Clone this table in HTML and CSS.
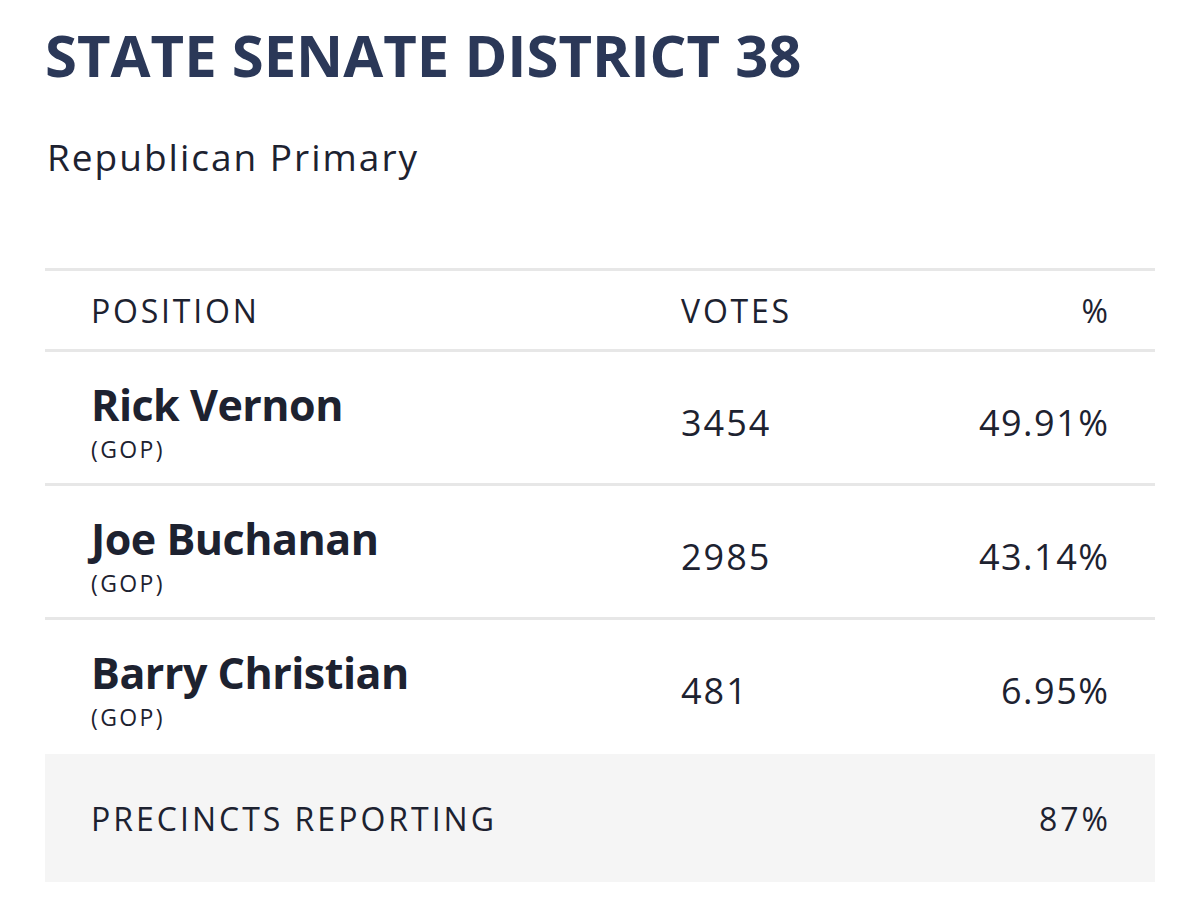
FILE: index.html
```html
<!DOCTYPE html>
<html lang="en">
<head>
<meta charset="utf-8">
<title>State Senate District 38</title>
<link rel="stylesheet" href="styles.css">
</head>
<body>
<main class="race">
  <h1 class="race-title">STATE SENATE DISTRICT 38</h1>
  <p class="race-sub">Republican Primary</p>
  <div class="results">
    <div class="row head">
      <span class="col-name">POSITION</span>
      <span class="col-votes">VOTES</span>
      <span class="col-pct">%</span>
    </div>
    <div class="row cand">
      <div class="col-name">
        <div class="cand-name">Rick Vernon</div>
        <div class="cand-party">(GOP)</div>
      </div>
      <span class="col-votes">3454</span>
      <span class="col-pct">49.91%</span>
    </div>
    <div class="row cand">
      <div class="col-name">
        <div class="cand-name">Joe Buchanan</div>
        <div class="cand-party">(GOP)</div>
      </div>
      <span class="col-votes">2985</span>
      <span class="col-pct">43.14%</span>
    </div>
    <div class="row cand last">
      <div class="col-name">
        <div class="cand-name">Barry Christian</div>
        <div class="cand-party">(GOP)</div>
      </div>
      <span class="col-votes">481</span>
      <span class="col-pct">6.95%</span>
    </div>
    <div class="row foot">
      <span class="col-name">PRECINCTS REPORTING</span>
      <span class="col-votes"></span>
      <span class="col-pct">87%</span>
    </div>
  </div>
</main>
</body>
</html>
```
FILE: styles.css
```css
html, body {
  margin: 0;
  padding: 0;
  background: #ffffff;
}
body {
  font-family: "Open Sans", "Liberation Sans", sans-serif;
  color: #1d2230;
}
.race {
  padding: 0 45px;
}
.race-title {
  margin: 0;
  padding-top: 20px;
  font-size: 58px;
  line-height: 70px;
  font-weight: 700;
  color: #2b3858;
}
.race-sub {
  margin: 0;
  padding-top: 45px;
  padding-left: 2px;
  font-size: 37px;
  line-height: 44px;
  font-weight: 400;
  letter-spacing: 2px;
  color: #1d2230;
}
.results {
  margin-top: 89px;
  border-top: 3px solid #e7e7e7;
}
.row {
  display: grid;
  grid-template-columns: 590px 1fr auto;
  align-items: center;
  padding: 0 47px 0 46px;
}
.head {
  height: 78px;
  border-bottom: 3px solid #e7e7e7;
  font-size: 32px;
  letter-spacing: 2.8px;
}
.head .col-pct {
  letter-spacing: 0;
}
.cand {
  box-sizing: border-box;
  height: 134px;
  padding-top: 23px;
  align-items: start;
  border-bottom: 3px solid #e7e7e7;
}
.cand.last {
  border-bottom: none;
}
.cand-name {
  font-size: 43px;
  line-height: 59px;
  font-weight: 700;
  letter-spacing: -0.5px;
}
.cand-party {
  font-size: 23px;
  line-height: 31px;
  letter-spacing: 2.4px;
}
.cand .col-votes,
.cand .col-pct {
  margin-top: 23px;
  font-size: 36px;
  line-height: 49px;
}
.cand .col-votes {
  letter-spacing: 2px;
}
.cand .col-pct {
  letter-spacing: 1.5px;
  margin-right: -1.5px;
}
.col-pct {
  text-align: right;
}
.foot {
  height: 128px;
  background: #f5f5f5;
  font-size: 32px;
  letter-spacing: 3px;
}
.foot .col-pct {
  margin-right: -3px;
}
```
